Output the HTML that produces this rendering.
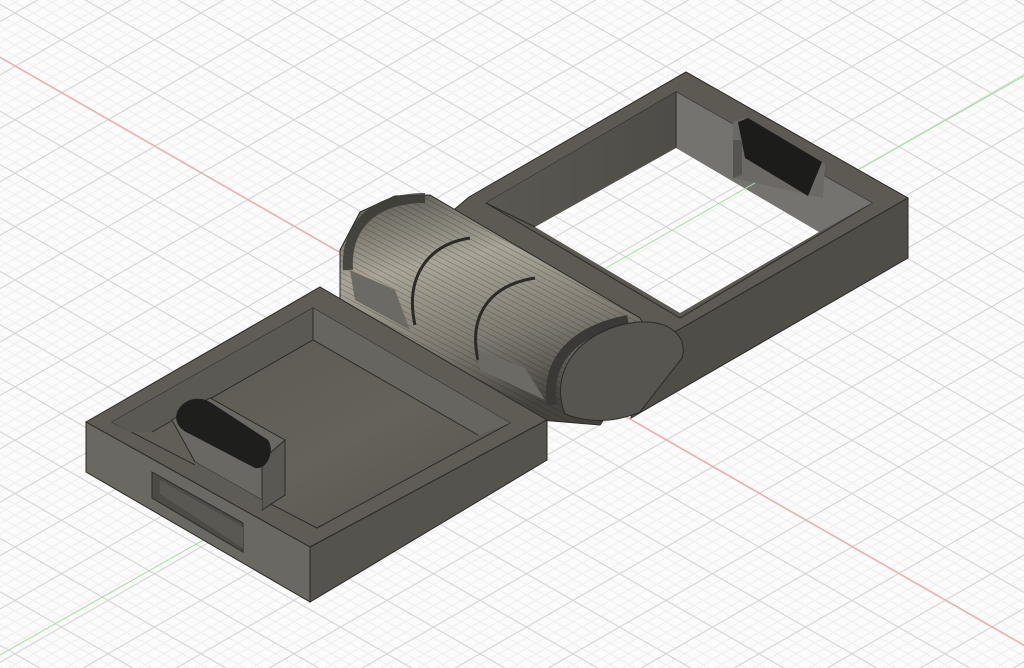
<!DOCTYPE html>
<html><head><meta charset="utf-8"><style>
html,body{margin:0;padding:0;background:#fff;}
svg{display:block;}
</style></head><body>
<svg width="1024" height="668" viewBox="0 0 1024 668" xmlns="http://www.w3.org/2000/svg">
<defs>
<pattern id="minor" x="15" y="13" width="18.6" height="10.68" patternUnits="userSpaceOnUse">
<path d="M0 0L18.6 10.68M0 10.68L18.6 0" stroke="#eeeeee" stroke-width="1" fill="none"/>
</pattern>
<pattern id="major" x="15" y="13" width="93" height="53.4" patternUnits="userSpaceOnUse">
<path d="M0 0L93 53.4M0 53.4L93 0" stroke="#d4d4d4" stroke-width="1" fill="none"/>
</pattern>
<linearGradient id="cyl" x1="0" y1="0" x2="0.3" y2="1">
<stop offset="0" stop-color="#55534d"/><stop offset="0.35" stop-color="#aaa598"/><stop offset="0.7" stop-color="#7e7a71"/><stop offset="1" stop-color="#45433e"/>
</linearGradient>
<linearGradient id="floor" x1="0" y1="0" x2="1" y2="1">
<stop offset="0" stop-color="#5a5750"/><stop offset="0.6" stop-color="#65625a"/><stop offset="1" stop-color="#55534d"/>
</linearGradient>
<linearGradient id="wallA" x1="0" y1="0" x2="1" y2="0">
<stop offset="0" stop-color="#5a5852"/><stop offset="1" stop-color="#4e4c47"/>
</linearGradient>
<pattern id="strip" width="5" height="5" patternUnits="userSpaceOnUse" patternTransform="rotate(28)">
<path d="M0 0L5 0" stroke="#22211f" stroke-width="0.9"/>
</pattern>
</defs>
<rect width="1024" height="668" fill="#fbfbfb"/>
<rect width="1024" height="668" fill="url(#minor)"/>
<rect width="1024" height="668" fill="url(#major)"/>
<line x1="0" y1="57" x2="1024" y2="645" stroke="#f2a0a0" stroke-width="1"/>
<line x1="0" y1="655" x2="1024" y2="76" stroke="#9ee09e" stroke-width="1"/>

<!-- RIGHT FRAME -->
<polygon points="469,197 686,72 908,198 640,352 430,230" fill="#5d5a53" stroke="#2b2a27" stroke-width="1"/>
<polygon points="908,198 908,258 631,418 640,352" fill="#4f4d47" stroke="#2b2a27" stroke-width="1"/>
<polygon points="486,203 676,92 872,203 680,318" fill="#5b5852" stroke="#2b2a27" stroke-width="1"/>
<polygon points="486,203 676,92 676,148 535,227" fill="url(#wallA)"/>
<polygon points="676,92 872,203 819,232 676,148" fill="#747370"/>
<polygon points="676,148 819,232 680,313 535,227" fill="#fbfbfb"/>
<polygon points="676,148 819,232 680,313 535,227" fill="url(#minor)"/>
<polygon points="676,148 819,232 680,313 535,227" fill="url(#major)"/>
<line x1="606" y1="268" x2="795" y2="160" stroke="#9ee09e" stroke-width="1"/>
<polygon points="733,122 745,118 825,164 823,198 733,178" fill="#6a6965"/>
<polygon points="738,122 748,118 822,162 808,196 745,158" fill="#1c1c1b"/>
<polygon points="733,140 733,178 742,175 742,140" fill="#555450"/>
<line x1="676" y1="92" x2="676" y2="148" stroke="#2b2a27"/>
<line x1="486" y1="203" x2="535" y2="227" stroke="#2b2a27"/>

<!-- HINGE -->
<polygon points="340,250 360,212 395,196 430,195 640,318 655,345 600,425 540,420 340,300" fill="url(#cyl)" stroke="#2b2a27" stroke-width="1"/>
<polygon points="340,250 360,212 395,196 430,195 640,318 655,345 600,425 540,420 340,300" fill="url(#strip)" opacity="0.5"/>
<path d="M348,270 C345,225 375,198 425,198" stroke="#3a3935" stroke-width="10" fill="none" opacity="0.85"/>
<path d="M415,325 C405,280 425,245 470,238" stroke="#2b2a27" stroke-width="3" fill="none"/>
<path d="M478,360 C468,315 490,285 535,278" stroke="#2b2a27" stroke-width="3" fill="none"/>
<polygon points="350,270 395,290 410,330 355,300" fill="#6c6a64"/>
<polygon points="478,350 525,368 545,400 480,370" fill="#6c6a64"/>
<path d="M552,405 C545,360 575,330 628,320" stroke="#3a3935" stroke-width="10" fill="none"/>
<path d="M565,414 C548,372 580,328 638,322 C672,320 688,338 682,358 L640,412 C612,424 585,422 565,414 Z" fill="#57554f" stroke="#2b2a27" stroke-width="1"/>

<!-- LEFT BOX -->
<polygon points="86,422 320,287 547,420 310,547" fill="#5f5c55" stroke="#2b2a27" stroke-width="1"/>
<polygon points="86,422 310,547 310,602 86,472" fill="#6a6863" stroke="#2b2a27" stroke-width="1"/>
<polygon points="310,547 547,420 547,460 310,602" fill="#55534d" stroke="#2b2a27" stroke-width="1"/>
<polygon points="112,422 313,308 510,423 317,528" fill="url(#floor)" stroke="#2b2a27" stroke-width="1"/>
<polygon points="112,422 313,308 313,340 152,432 130,432" fill="#5b5953"/>
<polygon points="313,308 510,423 478,435 313,340" fill="#67655f"/>
<line x1="313" y1="308" x2="313" y2="340" stroke="#2b2a27"/>
<polyline points="152,432 313,340 478,435" stroke="#2b2a27" fill="none"/>
<!-- latch block -->
<polygon points="172,420 210,398 285,440 285,495 262,500 195,462" fill="#6a6863" stroke="#2b2a27"/>
<polygon points="262,460 285,440 285,495 262,510" fill="#5a5853" stroke="#2b2a27"/>
<path d="M178,410 C185,398 200,396 210,402 L268,440 C275,450 268,470 255,468 L190,434 C176,428 174,418 178,410Z" fill="#1e1e1d"/>
<polygon points="195,462 262,500 262,510 195,472" fill="#5e5c56"/>
<!-- slot -->
<polygon points="152,472 243,523 243,552 152,498" fill="#4d4b46" stroke="#2b2a27"/>
<polygon points="160,480 243,527 243,548 160,494" fill="#5a5852"/>
</svg>
</body></html>
